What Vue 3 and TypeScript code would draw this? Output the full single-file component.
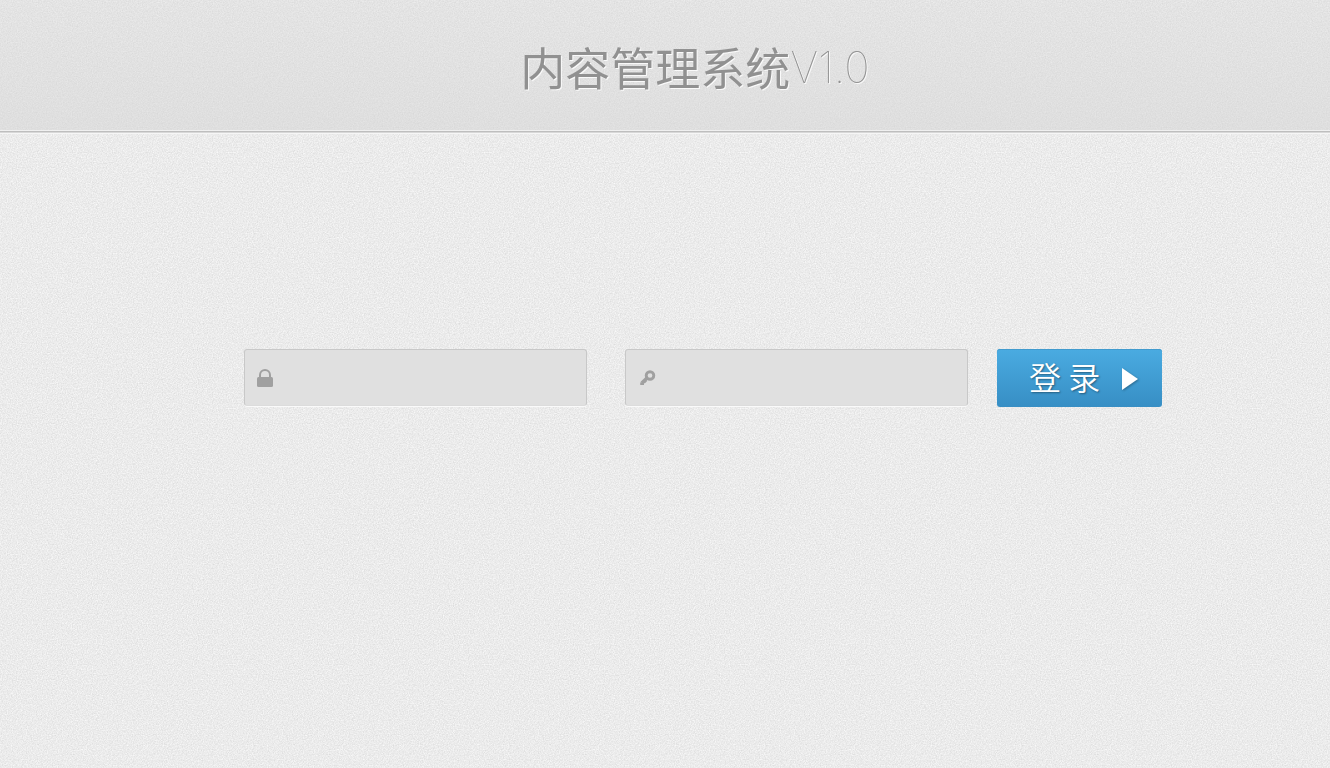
<script setup lang="ts">
import { ref } from 'vue'

const account = ref<string>('')
const password = ref<string>('')

function login(): void {
  password.value = ''
}
</script>

<template>
  <div class="page">
    <header class="banner">
      <h1 class="title">内容管理系统<span class="version">V1.0</span></h1>
    </header>
    <main>
      <form class="login" @submit.prevent="login">
        <label class="field" for="account">
          <svg class="icon" viewBox="0 0 20 20" aria-hidden="true">
            <path d="M5 10V7a5 5 0 0 1 10 0v3" fill="none" stroke="#a0a0a0" stroke-width="2" />
            <rect x="2" y="9" width="16" height="10" rx="1.5" fill="#a0a0a0" />
          </svg>
          <input id="account" v-model="account" type="text" aria-label="用户名" autocomplete="username" />
        </label>
        <label class="field" for="password">
          <svg class="icon" viewBox="0 0 20 20" aria-hidden="true">
            <circle cx="14" cy="7.5" r="3.8" fill="none" stroke="#a0a0a0" stroke-width="2.9" />
            <path d="M11 10 5.8 15M8.4 12.6l1.6 1.6" fill="none" stroke="#a0a0a0" stroke-width="3.4" />
            <path d="M4.2 14.4h3.8v2.6H4.2z" fill="#a0a0a0" />
          </svg>
          <input id="password" v-model="password" type="password" aria-label="密码" autocomplete="current-password" />
        </label>
        <button class="submit" type="submit">
          <span>登 录</span>
          <svg class="arrow" viewBox="0 0 16 24" aria-hidden="true"><path d="M0 1v22l16-11z" fill="#fff" /></svg>
        </button>
      </form>
    </main>
  </div>
</template>

<style>
body {
  margin: 0;
}
</style>

<style scoped>
.page {
  min-height: 100vh;
  background: #ebebeb url("data:image/svg+xml,%3Csvg xmlns='http://www.w3.org/2000/svg' width='256' height='256'%3E%3Cfilter id='n' x='0' y='0' width='100%25' height='100%25' color-interpolation-filters='sRGB'%3E%3CfeTurbulence type='fractalNoise' baseFrequency='.8' numOctaves='3' stitchTiles='stitch'/%3E%3CfeColorMatrix values='.15 0 0 0 .847 .15 0 0 0 .847 .15 0 0 0 .847 0 0 0 0 1'/%3E%3C/filter%3E%3Crect width='256' height='256' filter='url(%23n)'/%3E%3C/svg%3E");
  font-family: "Liberation Sans", "Noto Sans CJK SC", sans-serif;
}

.banner {
  box-sizing: border-box;
  height: 132px;
  padding: 34px 0 0 60px;
  border-bottom: 1px solid #bebebe;
  background: linear-gradient(rgba(214, 214, 214, 0.35), rgba(212, 212, 212, 0.55));
  box-shadow: inset 0 -1px #f0f0f0, 0 1px #d8d8d8, 0 2px #f6f6f6;
}

.title {
  display: flex;
  justify-content: center;
  align-items: center;
  margin: 0;
  color: #919191;
  font: 400 45px/66px "Noto Sans CJK SC", sans-serif;
  text-shadow: 1px 1px 0 #fafafa;
  will-change: opacity;
}

.version {
  font-family: Inter, sans-serif;
  font-size: 43px;
  font-weight: 100;
}

.login {
  display: flex;
  justify-content: center;
  padding: 217px 0 0 76px;
}

.field {
  box-sizing: border-box;
  display: flex;
  align-items: center;
  flex: 0 1 343px;
  height: 57px;
  margin-right: 38px;
  padding: 0 12px 0 10px;
  border: 1px solid #c8c8c8;
  border-bottom-color: #dcdcdc;
  border-radius: 3px;
  background: #e0e0e0;
  box-shadow: 0 1px #fafafa;
}

.field + .field {
  margin-right: 29px;
}

.icon {
  width: 20px;
  height: 20px;
  flex: none;
}

.field input {
  flex: 1;
  min-width: 0;
  height: 40px;
  margin-left: 12px;
  padding: 0;
  border: 0;
  outline: 0;
  background: transparent;
  color: #777;
  font-size: 20px;
}

.submit {
  display: flex;
  align-items: center;
  flex: none;
  width: 165px;
  height: 58px;
  padding: 0 24px 4px 32px;
  justify-content: space-between;
  border: 0;
  border-radius: 3px;
  background: linear-gradient(#4aabe1, #378ec4);
  box-shadow: inset 0 1px #419bce;
  color: #fff;
  font: 350 32px/54px "Noto Sans CJK SC", sans-serif;
  text-shadow: 1px 1px 2px rgba(0, 0, 0, 0.4);
  cursor: pointer;
}

.arrow {
  width: 16px;
  height: 24px;
  margin-top: 6px;
  filter: drop-shadow(1px 1px 1px rgba(0, 0, 0, 0.3));
}
</style>
